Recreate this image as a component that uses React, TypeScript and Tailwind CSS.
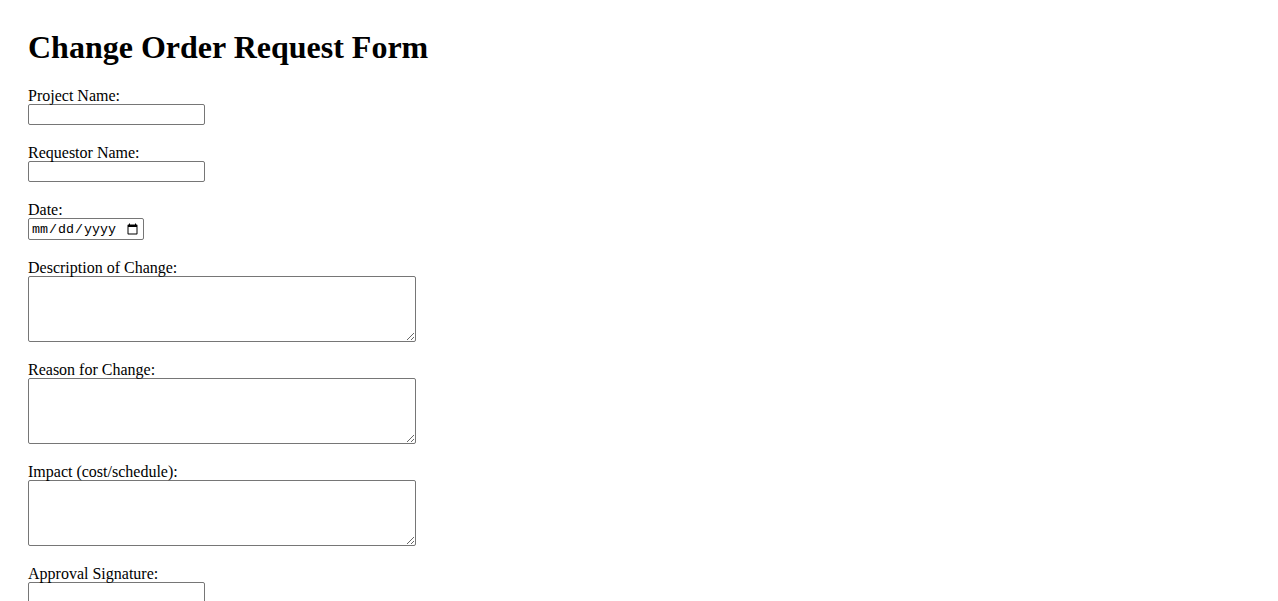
import React from 'react';

const serif = "font-['Liberation_Serif','Times_New_Roman',serif]";

const inputCls =
  'block h-[21px] w-[177px] rounded-[2px] border border-[#767676] bg-white px-[2px] py-[1px] text-[13.33px] font-[Arial,sans-serif]';
const areaCls =
  'block h-[66px] w-[388px] rounded-[2px] border border-[#767676] bg-white px-[2px] py-[2px] text-[13.33px] font-[Arial,sans-serif]';

function Field({ label, children }: { label: string; children: React.ReactNode }) {
  return (
    <div className="mb-[18px]">
      <label className="block h-[18px] pt-[1px] text-[16px] leading-[17px]">{label}</label>
      {children}
    </div>
  );
}

export default function App() {
  return (
    <div className={`min-h-[601px] bg-white pl-[28px] pt-[29px] text-black ${serif}`}>
      <h1 className="mb-[20px] text-[32px] font-bold leading-[37px]">Change Order Request Form</h1>
      <form className="flex flex-col">
        <Field label="Project Name:">
          <input type="text" className={inputCls} />
        </Field>
        <Field label="Requestor Name:">
          <input type="text" className={inputCls} />
        </Field>
        <Field label="Date:">
          <input
            type="date"
            className="block h-[22px] w-[116px] rounded-[2px] border border-[#767676] bg-white px-[2px] pt-[2px] pb-0 text-[13.33px] font-['Liberation_Mono',monospace]"
          />
        </Field>
        <Field label="Description of Change:">
          <textarea className={areaCls} />
        </Field>
        <Field label="Reason for Change:">
          <textarea className={areaCls} />
        </Field>
        <Field label="Impact (cost/schedule):">
          <textarea className={areaCls} />
        </Field>
        <Field label="Approval Signature:">
          <input type="text" className={inputCls} />
        </Field>
      </form>
    </div>
  );
}
